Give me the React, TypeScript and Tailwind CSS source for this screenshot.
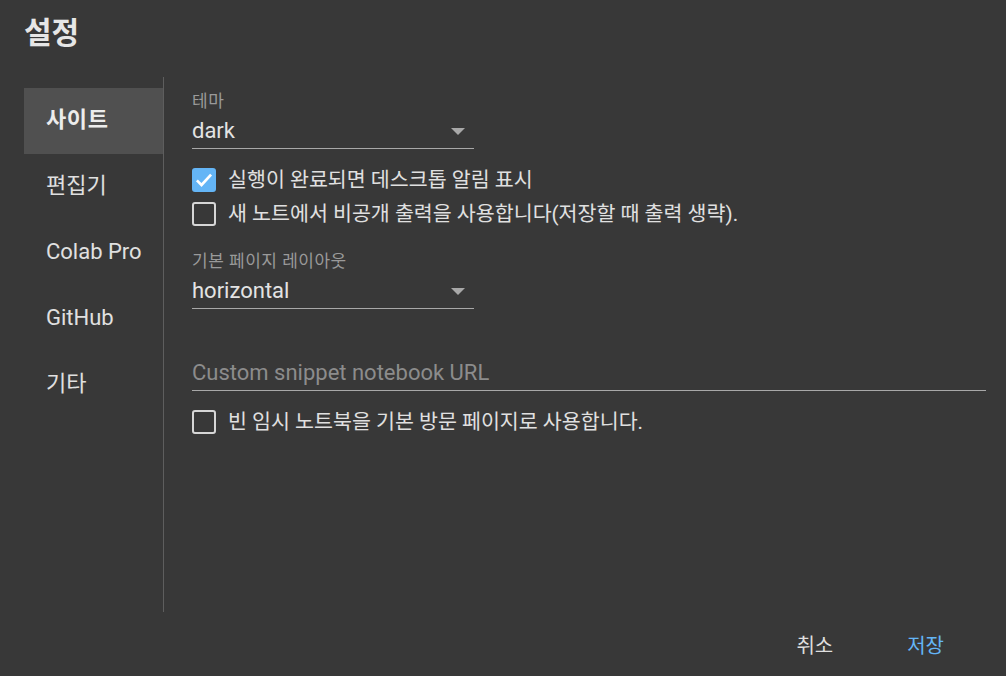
import React from "react";

const font = { fontFamily: 'Roboto, "Noto Sans CJK KR", sans-serif' };

function Check({ checked }: { checked?: boolean }) {
  if (checked) {
    return (
      <div className="w-6 h-6 rounded-[3px] bg-[#64b5f6] flex items-center justify-center shrink-0">
        <svg width="20" height="20" viewBox="0 0 24 24">
          <path d="M3.5 12.5 L9 18 L20.5 5.5" stroke="#ffffff" strokeWidth="3.2" fill="none" />
        </svg>
      </div>
    );
  }
  return <div className="w-6 h-6 rounded-[3px] border-2 border-[#d6d6d6] shrink-0" />;
}

function Select({ label, value }: { label: string; value: string }) {
  return (
    <div className="w-[282px]">
      <div className="text-[17px] tracking-[0.5px] leading-[20px] text-[#9a9a9a]">{label}</div>
      <div className="flex items-center justify-between h-[38px] pt-[3px] border-b border-[#a8a8a8] pr-[9px]">
        <span className="text-[22px] text-[#e3e3e3] leading-[26px]">{value}</span>
        <svg width="14" height="7" viewBox="0 0 14 7">
          <path d="M0 0 L14 0 L7 7 Z" fill="#a8a8a8" />
        </svg>
      </div>
    </div>
  );
}

function CheckRow({ checked, text }: { checked?: boolean; text: string }) {
  return (
    <div className="flex items-center gap-3 h-[24px]">
      <Check checked={checked} />
      <span className="text-[20.6px] text-[#e0e0e0] leading-[24px] whitespace-nowrap">{text}</span>
    </div>
  );
}

export default function App() {
  const items = ["사이트", "편집기", "Colab Pro", "GitHub", "기타"];
  return (
    <div className="w-[1006px] h-[676px] bg-[#383838] flex flex-col overflow-hidden" style={font}>
      <div className="h-[77px] pl-6 pt-[13px]">
        <div className="text-[30px] font-bold text-[#e6e6e6] leading-[40px]">설정</div>
      </div>
      <div className="flex h-[535px]">
        <div className="ml-6 w-[140px] border-r border-[#5e5e5e] pt-[11px]">
          {items.map((it, i) => (
            <div
              key={it}
              className={
                i === 0
                  ? "h-[66px] flex items-center pl-[22px] pb-[4px] bg-[#505050] text-[22px] tracking-[0.6px] font-bold text-[#ececec]"
                  : "h-[66px] flex items-center pl-[22px] pb-[3px] text-[22px] text-[#e0e0e0]"
              }
            >
              {it}
            </div>
          ))}
        </div>
        <div className="flex-1 pl-[28px] pr-[20px] pt-[14px] flex flex-col">
          <Select label="테마" value="dark" />
          <div className="mt-[19px] flex flex-col gap-[10px]">
            <CheckRow checked text="실행이 완료되면 데스크톱 알림 표시" />
            <CheckRow text="새 노트에서 비공개 출력을 사용합니다(저장할 때 출력 생략)." />
          </div>
          <div className="mt-[25px]">
            <Select label="기본 페이지 레이아웃" value="horizontal" />
          </div>
          <div className="mt-[44px] h-[38px] pt-[3px] border-b border-[#a8a8a8] flex items-center">
            <span className="text-[22px] text-[#8c8c8c] leading-[26px]">Custom snippet notebook URL</span>
          </div>
          <div className="mt-[19px]">
            <CheckRow text="빈 임시 노트북을 기본 방문 페이지로 사용합니다." />
          </div>
        </div>
      </div>
      <div className="flex-1 flex items-center justify-end pr-[62px] gap-[74px] pt-[4px]">
        <span className="text-[20px] text-[#dedede] leading-[26px]">취소</span>
        <span className="text-[20px] text-[#64b5f6] leading-[26px]">저장</span>
      </div>
    </div>
  );
}
